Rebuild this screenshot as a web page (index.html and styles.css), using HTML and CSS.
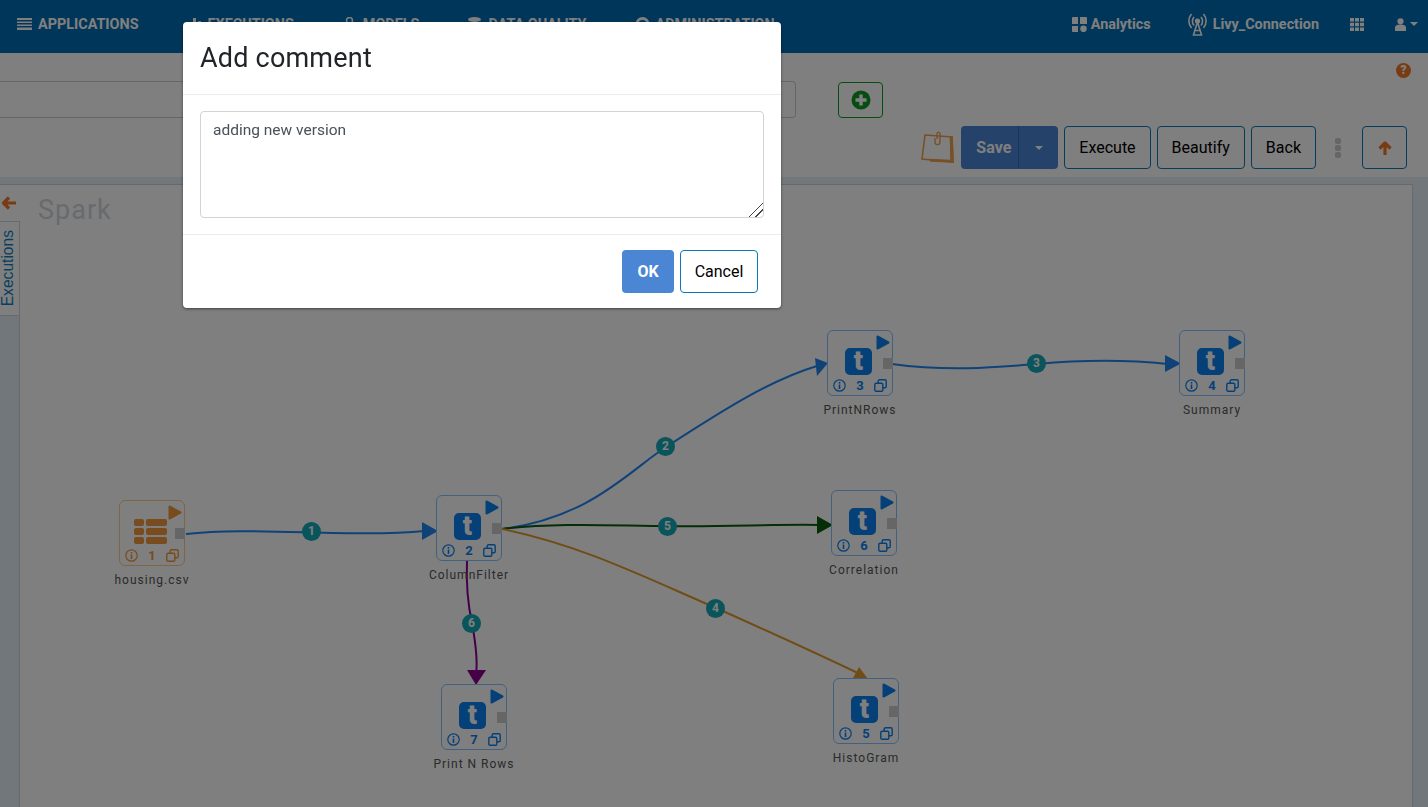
FILE: index.html
```html
<!DOCTYPE html>
<html>
<head>
	<meta charset="utf-8">
	<title>Spark pipeline - Add comment</title>
	<link rel="stylesheet" href="styles.css">
</head>
<body>
	<svg class="defs" width="0" height="0">
		<symbol id="i-play" viewBox="0 0 14 15"><path d="M1.5 1.5 L12.5 7.5 L1.5 13.5 Z" fill="currentColor" stroke="currentColor" stroke-width="2" stroke-linejoin="round"/></symbol>
		<symbol id="i-info" viewBox="0 0 13 13"><circle cx="6.5" cy="6.5" r="5.700" fill="none" stroke="currentColor" stroke-width="1.200"/><rect x="5.700" y="3" width="1.600" height="1.600" fill="currentColor"/><rect x="5.700" y="5.500" width="1.600" height="4.500" fill="currentColor"/></symbol>
		<symbol id="i-copy" viewBox="0 0 13 13"><rect x="4.200" y="0.800" width="8" height="8" rx="1.200" fill="none" stroke="currentColor" stroke-width="1.400"/><rect x="0.800" y="4.200" width="8" height="8" rx="1.200" fill="#fff" stroke="currentColor" stroke-width="1.400"/></symbol>
	</svg>

	<header class="topbar">
		<nav class="nav-left">
			<a class="nav-item">
				<svg class="nav-icon" width="15" height="14" viewBox="0 0 15 14"><path d="M0 1h15v2H0zM0 4.500h15v1.500H0zM0 7.500h15v1.500H0zM0 10.500h15v2.500H0z" fill="currentColor"/></svg>
				APPLICATIONS
			</a>
			<a class="nav-item">
				<svg class="nav-icon" width="15" height="14" viewBox="0 0 15 14"><path d="M1 7h3v6H1zM6 1h3v12H6zM11 4h3v9h-3z" fill="currentColor"/></svg>
				EXECUTIONS
			</a>
			<a class="nav-item">
				<svg class="nav-icon" width="15" height="14" viewBox="0 0 15 14"><circle cx="7.500" cy="3.500" r="3" fill="none" stroke="currentColor" stroke-width="1.500"/><path d="M2 14c0-4 2-6 5.500-6s5.500 2 5.500 6z" fill="currentColor"/></svg>
				MODELS
			</a>
			<a class="nav-item">
				<svg class="nav-icon" width="15" height="14" viewBox="0 0 15 14"><ellipse cx="7.500" cy="2.500" rx="6.500" ry="2.500" fill="currentColor"/><path d="M1 4.500c2 2 11 2 13 0V7c-2 2-11 2-13 0zM1 8.500c2 2 11 2 13 0V12c-2 2-11 2-13 0z" fill="currentColor"/></svg>
				DATA QUALITY
			</a>
			<a class="nav-item">
				<svg class="nav-icon" width="15" height="14" viewBox="0 0 15 14"><circle cx="7.500" cy="7" r="5.500" fill="none" stroke="currentColor" stroke-width="3"/></svg>
				ADMINISTRATION
			</a>
		</nav>
		<div class="nav-right">
			<a class="nav-item analytics">
				<svg width="15" height="15" viewBox="0 0 15 15"><path d="M0 1a1 1 0 0 1 1-1h5v7H0zM8 0h6a1 1 0 0 1 1 1v6H8zM0 9h6v6H1a1 1 0 0 1-1-1z" fill="currentColor"/><circle cx="11.500" cy="11.800" r="3.300" fill="currentColor"/></svg>
				Analytics
			</a>
			<a class="nav-item livy">
				<svg width="21" height="24" viewBox="0 0 21 24" fill="none" stroke="currentColor" stroke-width="1.600"><path d="M4.500 2C1 6 1 12 4.500 16M16.500 2C20 6 20 12 16.500 16M7 5c-1.800 2.400-1.800 6 0 8.500M14 5c1.800 2.400 1.800 6 0 8.500"/><circle cx="10.500" cy="9" r="1.800" fill="currentColor"/><path d="M10.500 10L6.500 23H14.500ZM8 18.500h5"/></svg>
				Livy_Connection
			</a>
			<a class="nav-item apps">
				<svg width="14" height="13" viewBox="0 0 14 13"><path d="M0 0h4v3.500H0zM5 0h4v3.500H5zM10 0h4v3.500h-4zM0 4.700h4v3.500H0zM5 4.700h4v3.500H5zM10 4.700h4v3.500h-4zM0 9.400h4v3.500H0zM5 9.400h4v3.500H5zM10 9.400h4v3.500h-4z" fill="currentColor"/></svg>
			</a>
			<a class="nav-item user">
				<svg width="11" height="13" viewBox="0 0 11 13"><circle cx="5.500" cy="3.300" r="3.100" fill="currentColor"/><path d="M0 13V9.500C0 7.500 2 6.500 5.500 6.500S11 7.500 11 9.500V13z" fill="currentColor"/></svg>
				<span class="caret"></span>
			</a>
		</div>
	</header>

	<section class="toolbar">
		<div class="help-row"><span class="help-icon">?</span></div>
		<div class="name-row">
			<div class="name-input"></div>
			<button class="add-btn">
				<svg width="20" height="20" viewBox="0 0 20 20"><circle cx="10" cy="10" r="9.500" fill="#0f9a22"/><path d="M10 4.500v11M4.500 10h11" stroke="#fff" stroke-width="3.400"/></svg>
			</button>
		</div>
		<div class="action-row">
			<svg class="note-icon" width="34" height="34" viewBox="0 0 34 34" fill="none" stroke="#f0a050" stroke-width="1.600"><path d="M4 4L31 6L32 31L1 28Z" fill="#fff"/><path d="M29.500 6L31 6L32 31L10 30L9.500 28.500L30 29.500Z" fill="#f0a050"/><path d="M14 7V11C14 14.500 19 14.500 19 11V3C19 .5 16 .5 16 3V8" stroke-width="1.400"/></svg>
			<div class="save-group">
				<button class="save-btn">Save</button>
				<button class="save-caret"><span class="caret"></span></button>
			</div>
			<button class="btn">Execute</button>
			<button class="btn">Beautify</button>
			<button class="btn">Back</button>
			<span class="kebab"><i></i><i></i><i></i></span>
			<button class="btn up-btn">
				<svg width="16" height="16" viewBox="0 0 16 16" fill="none" stroke="#f0782a" stroke-width="3.200" stroke-linejoin="round"><path d="M2.500 8.500L8 3L13.500 8.500M8 3V15"/></svg>
			</button>
		</div>
	</section>

	<div class="workspace">
		<div class="panel">
			<aside class="rail">
				<div class="rail-top">
					<svg width="16" height="16" viewBox="0 0 16 16" fill="none" stroke="#f0782a" stroke-width="3.200" stroke-linejoin="round"><path d="M8 2.500L2.500 8L8 13.500M2.500 8H15"/></svg>
				</div>
				<div class="rail-tab"><span>Executions</span></div>
				<div class="rail-rest"></div>
			</aside>
			<main class="canvas">
				<h2 class="canvas-title">Spark</h2>
				<svg class="edges" width="1392" height="622" viewBox="20 185 1392 622" fill="none" stroke-width="2">
					<path d="M186 534C250 526 350 538 425 531" stroke="#1f86f0"/>
					<polygon points="422,522 438,531 422,540" fill="#1f86f0"/>
					<path d="M502 529C590 518 630 470 666 447C720 412 770 380 817 366" stroke="#1f86f0"/>
					<polygon points="815,358 828,363 817,376" fill="#1f86f0"/>
					<path d="M892 364C950 372 1000 367 1037 364C1080 360 1130 360 1168 364" stroke="#1f86f0"/>
					<polygon points="1165,355 1181,363.500 1165,372" fill="#1f86f0"/>
					<path d="M502 529C560 522 620 526 668 526C720 527 780 524 820 525" stroke="#0a5c0c"/>
					<polygon points="817,516 833,525 817,534" fill="#0a5c0c"/>
					<path d="M502 529C580 545 640 575 716 608C770 632 820 655 860 674" stroke="#e09a2c"/>
					<polygon points="859,667 853,678 868,679" fill="#e09a2c"/>
					<path d="M467 561C466 585 468 605 472 623C476 645 478 660 476 674" stroke="#8a0090"/>
					<polygon points="467,670 486,670 476,685" fill="#8a0090"/>
				</svg>

				<span class="badge b1">1</span>
				<span class="badge b2">2</span>
				<span class="badge b3">3</span>
				<span class="badge b4">4</span>
				<span class="badge b5">5</span>
				<span class="badge b6">6</span>

				<div class="node n1 source">
					<div class="node-box">
						<svg class="node-play"><use href="#i-play"/></svg>
						<span class="node-port"></span>
						<svg class="table-icon" width="33" height="25" viewBox="0 0 33 25" fill="currentColor"><rect width="10" height="7" rx="2"/><rect x="12" width="21" height="7" rx="2"/><rect y="9" width="10" height="7" rx="2"/><rect x="12" y="9" width="21" height="7" rx="2"/><rect y="18" width="10" height="7" rx="2"/><rect x="12" y="18" width="21" height="7" rx="2"/></svg>
						<div class="node-foot"><svg><use href="#i-info"/></svg><b>1</b><svg><use href="#i-copy"/></svg></div>
					</div>
					<span class="node-label">housing.csv</span>
				</div>

				<div class="node n2">
					<div class="node-box">
						<svg class="node-play"><use href="#i-play"/></svg>
						<span class="node-port"></span>
						<span class="t-icon">t</span>
						<div class="node-foot"><svg><use href="#i-info"/></svg><b>2</b><svg><use href="#i-copy"/></svg></div>
					</div>
					<span class="node-label">ColumnFilter</span>
				</div>

				<div class="node n3">
					<div class="node-box">
						<svg class="node-play"><use href="#i-play"/></svg>
						<span class="node-port"></span>
						<span class="t-icon">t</span>
						<div class="node-foot"><svg><use href="#i-info"/></svg><b>3</b><svg><use href="#i-copy"/></svg></div>
					</div>
					<span class="node-label">PrintNRows</span>
				</div>

				<div class="node n4">
					<div class="node-box">
						<svg class="node-play"><use href="#i-play"/></svg>
						<span class="node-port"></span>
						<span class="t-icon">t</span>
						<div class="node-foot"><svg><use href="#i-info"/></svg><b>4</b><svg><use href="#i-copy"/></svg></div>
					</div>
					<span class="node-label">Summary</span>
				</div>

				<div class="node n5">
					<div class="node-box">
						<svg class="node-play"><use href="#i-play"/></svg>
						<span class="node-port"></span>
						<span class="t-icon">t</span>
						<div class="node-foot"><svg><use href="#i-info"/></svg><b>5</b><svg><use href="#i-copy"/></svg></div>
					</div>
					<span class="node-label">HistoGram</span>
				</div>

				<div class="node n6">
					<div class="node-box">
						<svg class="node-play"><use href="#i-play"/></svg>
						<span class="node-port"></span>
						<span class="t-icon">t</span>
						<div class="node-foot"><svg><use href="#i-info"/></svg><b>6</b><svg><use href="#i-copy"/></svg></div>
					</div>
					<span class="node-label">Correlation</span>
				</div>

				<div class="node n7">
					<div class="node-box">
						<svg class="node-play"><use href="#i-play"/></svg>
						<span class="node-port"></span>
						<span class="t-icon">t</span>
						<div class="node-foot"><svg><use href="#i-info"/></svg><b>7</b><svg><use href="#i-copy"/></svg></div>
					</div>
					<span class="node-label">Print N Rows</span>
				</div>
			</main>
		</div>
	</div>

	<div class="backdrop"></div>

	<div class="modal">
		<div class="modal-head"><h3>Add comment</h3></div>
		<div class="modal-body">
			<textarea class="comment">adding new version</textarea>
		</div>
		<div class="modal-foot">
			<button class="ok-btn">OK</button>
			<button class="btn cancel-btn">Cancel</button>
		</div>
	</div>
</body>
</html>
```

FILE: styles.css
```css
* {margin: 0; padding: 0; box-sizing: border-box;}
html, body {height: 100%;}
body {display: flex; flex-direction: column; overflow: hidden; background: #fff; font-family: Roboto, "Liberation Sans", sans-serif; color: #000;}
button {font-family: inherit; cursor: pointer;}
.defs {position: absolute;}

/* top bar */
.topbar {display: flex; justify-content: space-between; align-items: center; height: 53px; flex: none; background: #006cb4; color: #fff; padding: 0 10px 5px 17px;}
.nav-left {display: flex; gap: 48px;}
.nav-right {display: flex; align-items: center;}
.nav-item {display: flex; align-items: center; gap: 6px; font-size: 14.4px; font-weight: 700; white-space: nowrap;}
.nav-icon {flex: none;}
.analytics {gap: 4px;}
.livy {margin-left: 36px; gap: 5px;}
.apps {margin-left: 31px;}
.user {margin-left: 31px; gap: 4px;}
.caret {display: inline-block; width: 0; height: 0; border-left: 4px solid transparent; border-right: 4px solid transparent; border-top: 4px solid #fff;}

/* toolbar */
.toolbar {flex: none; height: 124px; padding-top: 10px;}
.help-row {display: flex; justify-content: flex-end; height: 18px; padding-right: 17px;}
.help-icon {width: 15px; height: 15px; border-radius: 50%; background: #f0782a; color: #fff; font-size: 12px; font-weight: 900; line-height: 15px; text-align: center;}
.name-row {display: flex; align-items: center; height: 37px;}
.name-input {width: 796px; height: 37px; border: 1px solid #ccc; border-left: 0; border-radius: 0 4px 4px 0;}
.add-btn {display: flex; align-items: center; justify-content: center; margin-left: 42px; width: 45px; height: 36px; border: 1px solid #0f9a22; border-radius: 4px; background: #fff;}
.action-row {display: flex; justify-content: flex-end; align-items: center; gap: 6px; height: 43px; margin-top: 8px; padding-right: 21px;}
.note-icon {flex: none;}
.btn {height: 43px; padding: 0 14px; border: 1px solid #0a7ab8; border-radius: 4px; background: #fff; color: #000; font-size: 16px;}
.save-group {display: flex; height: 43px; border-radius: 4px; overflow: hidden; background: #4a86d4;}
.save-btn {width: 58px; padding-left: 8px; border: 0; border-right: 1px solid #2c6cb8; background: none; color: #fff; font-size: 16px; font-weight: 700;}
.save-caret {display: flex; align-items: center; justify-content: center; width: 39px; border: 0; background: none;}
.kebab {display: flex; flex-direction: column; gap: 1px; margin: 0 15px 0 13px;}
.kebab i {display: block; width: 6px; height: 6px; border-radius: 2px; background: #ccc;}
.up-btn {display: flex; align-items: center; justify-content: center; width: 45px; padding: 0;}

/* workspace */
.workspace {flex: 1; min-height: 0; padding: 7px 15px 0 0; background: #e2eef6;}
.panel {display: flex; height: 100%; border-top: 1px solid #ccd4da; border-right: 1px solid #ccd4da; background: #fff;}
.rail {display: flex; flex-direction: column; flex: none; width: 20px;}
.rail-top {display: flex; justify-content: center; height: 36px; padding: 10px 2px 0 0;}
.rail-tab {display: flex; align-items: center; height: 95px; border: 1px solid #ccd4da; border-width: 1px 1px 1px 0;}
.rail-tab span {writing-mode: vertical-rl; transform: rotate(180deg); font-family: "Liberation Sans", sans-serif; font-size: 15.6px; color: #0e80c0; line-height: 16px;}
.rail-rest {flex: 1; border-right: 1px solid #ccd4da; background: #e2eef6;}

.canvas {position: relative; flex: 1; overflow: hidden;}
.canvas-title {margin: 11px 0 0 18px; font-size: 27px; font-weight: 400; line-height: 28px; letter-spacing: 1px; color: #d0d6dc;}
.edges {position: absolute; left: 0; top: 0;}

.badge {position: absolute; width: 19px; height: 19px; border-radius: 50%; background: #14a8b8; color: #fff; font-size: 12px; font-weight: 700; line-height: 19px; text-align: center;}
.b1 {left: 282px; top: 337px;}
.b2 {left: 636px; top: 252px;}
.b3 {left: 1007px; top: 169px;}
.b4 {left: 686px; top: 414px;}
.b5 {left: 638px; top: 332px;}
.b6 {left: 442px; top: 429px;}

/* graph nodes, placed on the canvas */
.node {position: absolute; display: flex; flex-direction: column; align-items: center; width: 66px; color: #0a80f0;}
.n1 {left: 99px; top: 315px;}
.n2 {left: 416px; top: 310px;}
.n3 {left: 807px; top: 145px;}
.n4 {left: 1159px; top: 145px;}
.n5 {left: 813px; top: 493px;}
.n6 {left: 811px; top: 305px;}
.n7 {left: 421px; top: 499px;}
.node-box {position: relative; display: flex; flex-direction: column; align-items: center; width: 66px; height: 66px; padding-top: 17px; border: 1px solid #88c0ff; border-radius: 6px; background: #fff;}
.node-play {position: absolute; left: 48px; top: 4px; width: 14px; height: 15px;}
.node-port {position: absolute; right: -1px; top: 27px; width: 10px; height: 11px; background: #ccc;}
.t-icon {display: flex; align-items: center; justify-content: center; width: 27px; height: 27px; margin-right: 3px; border-radius: 5px; background: #0a80f0; color: #fff; font-size: 27px; font-weight: 900; line-height: 27px;}
.node-foot {display: flex; justify-content: space-between; align-items: center; width: 54px; height: 13px; margin-top: 4px;}
.node-foot svg {width: 13px; height: 13px;}
.node-foot b {font-size: 13px; line-height: 13px; font-weight: 700;}
.node-label {margin-top: 7px; font-size: 12px; line-height: 14px; letter-spacing: 1px; color: #555; white-space: nowrap;}
.source {color: #f0983c;}
.source .node-box {border-color: #ffc98c; padding-top: 18px;}
.source .node-foot {margin-top: 5px;}
.table-icon {flex: none; margin-right: 3px;}

/* dialog */
.backdrop {position: fixed; left: 0; top: 0; right: 0; bottom: 0; background: rgba(0, 0, 0, 0.5);}
.modal {position: fixed; left: 183px; top: 22px; width: 598px; height: 286px; display: flex; flex-direction: column; background: #fff; border-radius: 4px; box-shadow: 0 1px 3px rgba(0, 0, 0, 0.5);}
.modal-head {display: flex; align-items: center; height: 73px; padding: 0 17px; border-bottom: 1px solid #e9ecef;}
.modal-head h3 {font-size: 27px; font-weight: 400; color: #212529; letter-spacing: 0.2px;}
.modal-body {height: 140px; padding: 16px 17px; border-bottom: 1px solid #e9ecef;}
.comment {display: block; width: 564px; height: 107px; padding: 8px 12px; border: 1px solid #ced4da; border-radius: 4px; font-family: inherit; font-size: 15.5px; line-height: 20px; color: #495057; outline: 0;}
.comment::-webkit-resizer {background: linear-gradient(135deg, transparent 50%, #444 50%, #444 56%, transparent 56%, transparent 72%, #444 72%, #444 78%, transparent 78%);}
.modal-foot {display: flex; justify-content: flex-end; gap: 6px; padding: 15px 23px 0 0;}
.ok-btn {width: 52px; height: 43px; border: 0; border-radius: 4px; background: #4a86d4; color: #fff; font-size: 16px; font-weight: 700;}
.cancel-btn {width: 78px; padding: 0;}
```
